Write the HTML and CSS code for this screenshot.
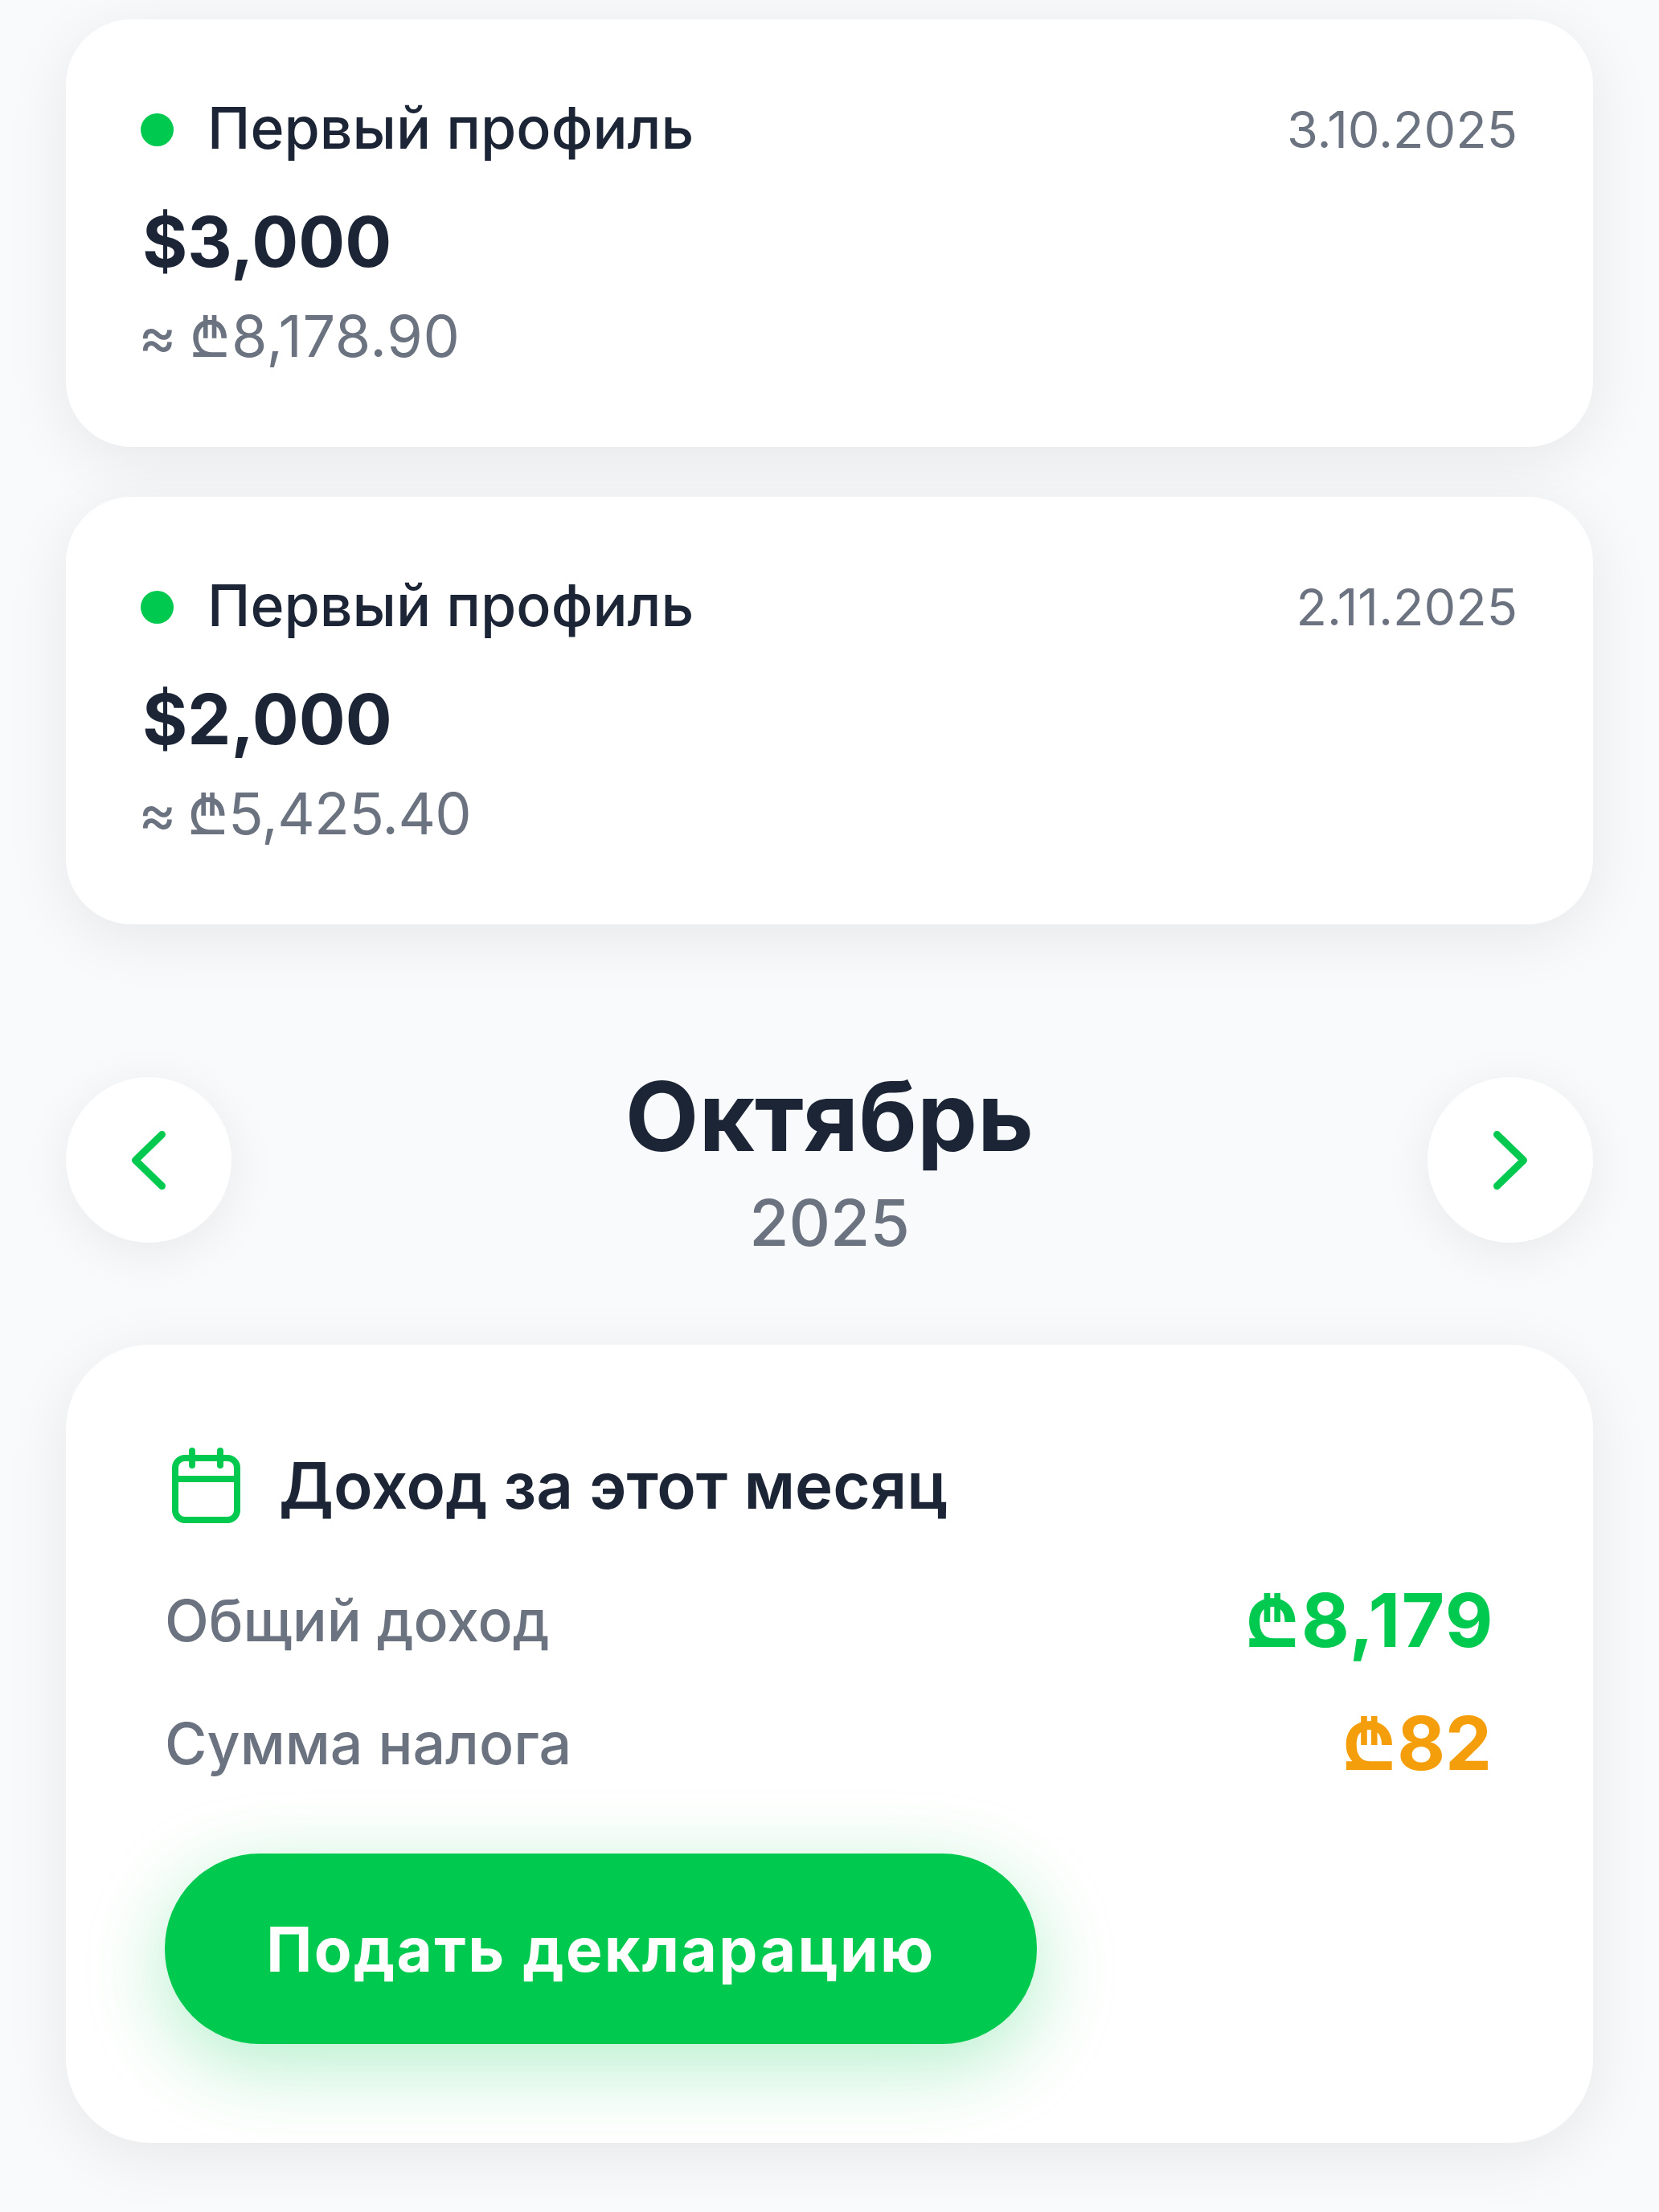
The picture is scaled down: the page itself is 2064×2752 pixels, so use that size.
FILE: index.html
```html
<!DOCTYPE html>
<html lang="ru">
<head>
<meta charset="utf-8">
<title>Доход</title>
<link rel="stylesheet" href="styles.css">
</head>
<body>
<main class="page">
  <section class="card entry">
    <div class="entry-head">
      <span class="dot"></span>
      <span class="name">Первый профиль</span>
      <span class="date">3.10.2025</span>
    </div>
    <div class="amount">$3,000</div>
    <div class="approx approx-loose">≈ ₾8,178.90</div>
  </section>
  <section class="card entry">
    <div class="entry-head">
      <span class="dot"></span>
      <span class="name">Первый профиль</span>
      <span class="date">2.11.2025</span>
    </div>
    <div class="amount">$2,000</div>
    <div class="approx approx-tight">≈ ₾5,425.40</div>
  </section>
  <nav class="month-nav">
    <button class="round" aria-label="Назад">
      <svg class="chev" viewBox="0 0 42 73"><path d="M37.5 4.5 L4.5 36.5 L37.5 68.5"/></svg>
    </button>
    <div class="month">
      <div class="month-name">Октябрь</div>
      <div class="month-year">2025</div>
    </div>
    <button class="round" aria-label="Вперёд">
      <svg class="chev" viewBox="0 0 42 73"><path d="M4.5 4.5 L37.5 36.5 L4.5 68.5"/></svg>
    </button>
  </nav>
  <section class="card summary">
    <header class="summary-head">
      <svg class="cal" viewBox="0 0 85 94"><rect x="4" y="13" width="77" height="77" rx="12"/><path d="M4 39H81M25 4V22M60 4V22"/></svg>
      <h2 class="summary-title">Доход за этот месяц</h2>
    </header>
    <div class="row">
      <span class="row-label">Общий доход</span>
      <span class="row-value green">₾8,179</span>
    </div>
    <div class="row">
      <span class="row-label">Сумма налога</span>
      <span class="row-value orange">₾82</span>
    </div>
    <button class="cta">Подать декларацию</button>
  </section>
</main>
</body>
</html>
```
FILE: styles.css
```css
* { box-sizing: border-box; }
html, body { margin: 0; padding: 0; }
body {
  background: #f9fafb;
  font-family: Inter, "Noto Sans", sans-serif;
  color: #1c2536;
  width: 2064px;
  height: 2752px;
  overflow: hidden;
}
.page {
  padding: 24px 82px 0;
  display: flex;
  flex-direction: column;
}
.card {
  background: #fff;
  box-shadow: 0 16px 80px rgba(0, 0, 0, 0.08);
}
.entry {
  height: 532px;
  padding: 92px 94px 0 93px;
  margin-bottom: 62px;
  border-radius: 82px;
}
.entry-head {
  display: flex;
  align-items: center;
  height: 86px;
}
.dot {
  width: 41px;
  height: 41px;
  border-radius: 50%;
  background: #00c950;
  margin-top: 4px;
  margin-right: 42px;
}
.name {
  font-size: 71.7px;
  font-weight: 500;
  flex: 1;
}
.date {
  font-size: 63px;
  color: #6b7280;
  margin-top: 4px;
}
.amount {
  font-size: 86px;
  font-weight: 700;
  line-height: 110px;
  margin-top: 44px;
  padding-left: 2px;
}
.approx {
  font-size: 72px;
  color: #6b7280;
  line-height: 84px;
  margin-top: 20px;
  margin-left: -3px;
  word-spacing: -6px;
}
.approx-loose { letter-spacing: 0.6px; }
.approx-tight { letter-spacing: -0.7px; }
.month-nav {
  display: flex;
  justify-content: space-between;
  align-items: flex-start;
  margin-top: 128px;
  height: 240px;
}
.round {
  width: 206px;
  height: 206px;
  border: 0;
  padding: 0;
  border-radius: 50%;
  background: #fff;
  box-shadow: 0 12px 64px rgba(0, 0, 0, 0.07);
  display: flex;
  align-items: center;
  justify-content: center;
}
.chev {
  width: 42px;
  height: 73px;
  fill: none;
  stroke: #00c950;
  stroke-width: 9;
  stroke-linecap: round;
  stroke-linejoin: round;
}
.month { text-align: center; }
.month-name {
  font-size: 119px;
  font-weight: 700;
  line-height: 140px;
  margin-top: -21px;
}
.month-year {
  font-size: 80px;
  font-weight: 500;
  color: #6b7280;
  line-height: 94px;
  margin-top: 15px;
}
.summary {
  margin-top: 93px;
  height: 993px;
  padding: 128px 126px 0 123px;
  border-radius: 105px;
}
.summary-head {
  display: flex;
  align-items: center;
  height: 94px;
  margin-left: 9px;
  margin-bottom: 44px;
}
.cal {
  width: 85px;
  height: 94px;
  fill: none;
  stroke: #00c950;
  stroke-width: 8;
  stroke-linecap: round;
  margin-right: 48px;
}
.summary-title {
  margin: 0;
  font-size: 79.8px;
  font-weight: 600;
}
.row {
  display: flex;
  justify-content: space-between;
  align-items: center;
  height: 153px;
}
.row-label {
  font-size: 71.5px;
  font-weight: 500;
  color: #6b7280;
}
.row-value {
  font-size: 92px;
  font-weight: 700;
}
.green { color: #00c950; letter-spacing: 1.5px; margin-right: -3px; }
.orange { color: #f59e0b; }
.cta {
  display: block;
  margin-top: 61px;
  width: 1085px;
  height: 237px;
  border: 0;
  border-radius: 118px;
  background: #00c950;
  color: #fff;
  font-family: inherit;
  font-size: 76.5px;
  font-weight: 700;
  letter-spacing: 2.4px;
  box-shadow: 0 26px 100px rgba(0, 201, 80, 0.3);
}
```
